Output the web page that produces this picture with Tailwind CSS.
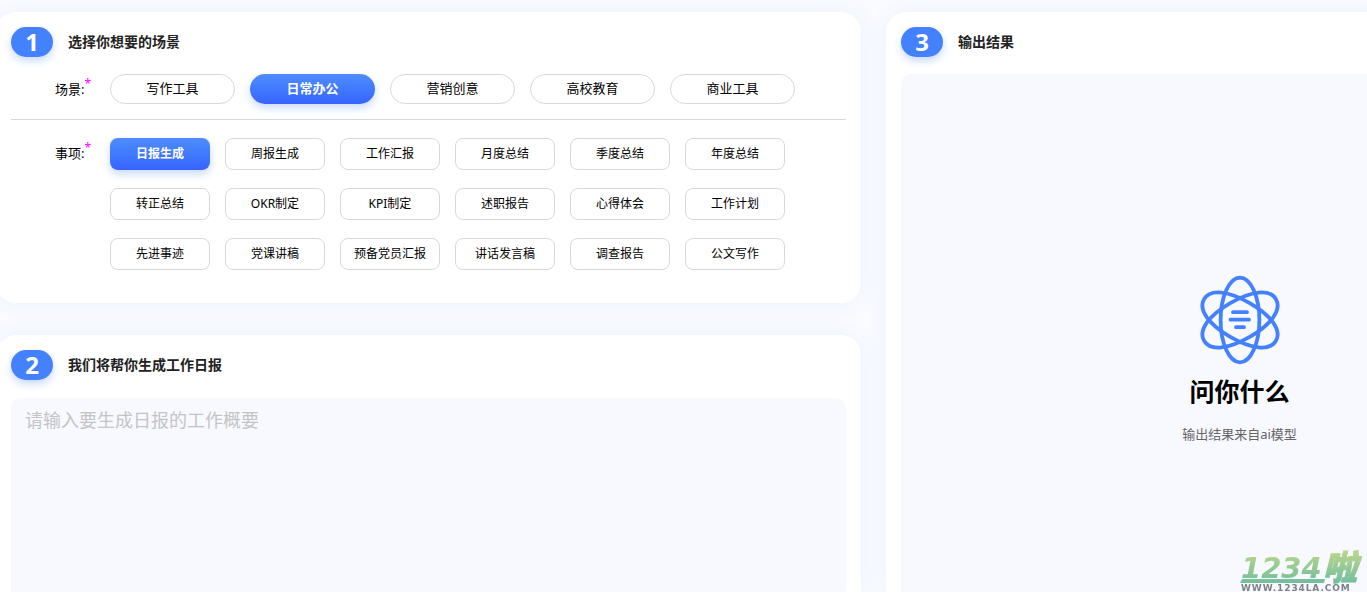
<!DOCTYPE html>
<html lang="zh-CN">
<head>
<meta charset="utf-8">
<meta name="viewport" content="width=device-width, initial-scale=1">
<title>问你什么</title>
<script src="https://cdn.jsdelivr.net/npm/@tailwindcss/browser@4"></script>
</head>
<body class="h-screen overflow-hidden bg-[#fafbff] font-['Noto_Sans','Noto_Sans_CJK_SC',sans-serif] text-black">
<main class="-ml-1 -mr-[226px] grid min-h-screen grid-cols-[865fr_707fr] gap-[25px] pt-3">
  <div class="flex min-w-0 flex-col gap-8">
    <section class="rounded-[20px] bg-white px-[15px] pt-[15px] pb-[33px] shadow-[0_0_25px_#eaf2ff]">
      <header class="flex items-center gap-[15px]">
        <span class="flex h-[30px] w-[42px] items-center justify-center rounded-full bg-[#4381ff] text-2xl font-bold text-white shadow-[0_4px_8px_#c9d9ff]">1</span>
        <h2 class="text-sm font-bold text-[#222]">选择你想要的场景</h2>
      </header>
      <div class="mt-[17px] flex border-b border-[#d9d9d9] pb-[15px]">
        <div id="scene" class="w-[99px] shrink-0 pl-11 text-[13px] leading-[30px]">场景:<sup class="text-xs text-[#f0f]">*</sup></div>
        <div role="group" aria-labelledby="scene" class="flex gap-[15px] text-[13px]">
          <button class="h-[30px] w-[125px] rounded-full border border-[#d9d9d9]">写作工具</button>
          <button class="h-[30px] w-[125px] rounded-full bg-linear-to-b from-[#4e8dff] to-[#3763ff] font-bold text-white shadow-[0_4px_8px_#c9d9ff]">日常办公</button>
          <button class="h-[30px] w-[125px] rounded-full border border-[#d9d9d9]">营销创意</button>
          <button class="h-[30px] w-[125px] rounded-full border border-[#d9d9d9]">高校教育</button>
          <button class="h-[30px] w-[125px] rounded-full border border-[#d9d9d9]">商业工具</button>
        </div>
      </div>
      <div class="mt-[18px] flex">
        <div id="item" class="w-[99px] shrink-0 pl-11 text-[13px] leading-[30px]">事项:<sup class="text-xs text-[#f0f]">*</sup></div>
        <div role="group" aria-labelledby="item" class="grid grid-cols-[repeat(6,100px)] gap-x-[15px] gap-y-[18px] text-xs">
          <button class="h-8 rounded-lg bg-linear-to-b from-[#4e8dff] to-[#3763ff] font-bold text-white shadow-[0_4px_8px_#c9d9ff]">日报生成</button>
          <button class="h-8 rounded-lg border border-[#d9d9d9]">周报生成</button>
          <button class="h-8 rounded-lg border border-[#d9d9d9]">工作汇报</button>
          <button class="h-8 rounded-lg border border-[#d9d9d9]">月度总结</button>
          <button class="h-8 rounded-lg border border-[#d9d9d9]">季度总结</button>
          <button class="h-8 rounded-lg border border-[#d9d9d9]">年度总结</button>
          <button class="h-8 rounded-lg border border-[#d9d9d9]">转正总结</button>
          <button class="h-8 rounded-lg border border-[#d9d9d9]">OKR制定</button>
          <button class="h-8 rounded-lg border border-[#d9d9d9]">KPI制定</button>
          <button class="h-8 rounded-lg border border-[#d9d9d9]">述职报告</button>
          <button class="h-8 rounded-lg border border-[#d9d9d9]">心得体会</button>
          <button class="h-8 rounded-lg border border-[#d9d9d9]">工作计划</button>
          <button class="h-8 rounded-lg border border-[#d9d9d9]">先进事迹</button>
          <button class="h-8 rounded-lg border border-[#d9d9d9]">党课讲稿</button>
          <button class="h-8 rounded-lg border border-[#d9d9d9]">预备党员汇报</button>
          <button class="h-8 rounded-lg border border-[#d9d9d9]">讲话发言稿</button>
          <button class="h-8 rounded-lg border border-[#d9d9d9]">调查报告</button>
          <button class="h-8 rounded-lg border border-[#d9d9d9]">公文写作</button>
        </div>
      </div>
    </section>
    <section class="flex grow flex-col rounded-t-[20px] bg-white px-[15px] pt-[15px] shadow-[0_0_25px_#eaf2ff]">
      <header class="flex items-center gap-[15px]">
        <span class="flex h-[30px] w-[42px] items-center justify-center rounded-full bg-[#4381ff] text-2xl font-bold text-white shadow-[0_4px_8px_#c9d9ff]">2</span>
        <h2 class="text-sm font-bold text-[#222]"><label for="summary">我们将帮你生成工作日报</label></h2>
      </header>
      <textarea id="summary" placeholder="请输入要生成日报的工作概要" class="mt-[18px] w-full grow resize-none rounded-t-[10px] bg-[#f7f9fe] px-[14px] py-2 text-lg leading-7 outline-none placeholder:text-[#c4c4c6]"></textarea>
    </section>
  </div>
  <section class="flex min-w-0 flex-col rounded-t-[20px] bg-white px-[15px] pt-[15px] shadow-[0_0_25px_#eaf2ff]">
    <header class="flex items-center gap-[15px]">
      <span class="flex h-[30px] w-[42px] items-center justify-center rounded-full bg-[#4381ff] text-2xl font-bold text-white shadow-[0_4px_8px_#c9d9ff]">3</span>
      <h2 class="text-sm font-bold text-[#222]">输出结果</h2>
    </header>
    <div class="mt-[17px] flex grow flex-col items-center rounded-t-[10px] bg-[#f7f9fe] pt-[200px]">
      <svg class="h-[92px] w-[84px]" viewBox="0 0 84 92" fill="none" stroke="#4381ff" stroke-width="3.800" stroke-linecap="round" aria-hidden="true">
        <ellipse cx="42" cy="46" rx="19.400" ry="42.300"/>
        <g transform="translate(42 46)">
          <path transform="rotate(60)" d="M-19.500 0C-19.500-24-12.500-41.500 0-41.500S19.500-24 19.500 0 12.500 41.500 0 41.500-19.500 24-19.500 0Z"/>
          <path transform="rotate(-60)" d="M-19.500 0C-19.500-24-12.500-41.500 0-41.500S19.500-24 19.500 0 12.500 41.500 0 41.500-19.500 24-19.500 0Z"/>
        </g>
        <path d="M35 38.200h14M32.500 45.700h18.500M38 53.200h8"/>
      </svg>
      <h1 class="mt-[7px] text-[25px] font-bold leading-9">问你什么</h1>
      <p class="mt-[15px] text-[13px] leading-5 text-[#666]">输出结果来自ai模型</p>
    </div>
  </section>
</main>
<a href="#" aria-label="1234啦" class="fixed right-0 bottom-0">
  <svg class="block h-[44px] w-[130px]" viewBox="0 0 130 44">
    <defs>
      <linearGradient id="leaf" gradientUnits="userSpaceOnUse" x1="0" y1="4" x2="0" y2="36">
        <stop stop-color="#b9d58b"/><stop offset="1" stop-color="#6fbe9d"/>
      </linearGradient>
    </defs>
    <text x="4" y="30" fill="url(#leaf)" font-family="DejaVu Sans" font-size="29" font-weight="bold" font-style="italic">1234</text>
    <text x="86" y="32" fill="url(#leaf)" stroke="url(#leaf)" stroke-width="1" font-family="Noto Sans CJK SC" font-size="34" font-weight="900" font-style="italic">啦</text>
    <path d="M5 31H88L87 35H3Z" fill="url(#leaf)"/>
    <text x="4" y="43" fill="#7e8286" class="tracking-widest" font-family="DejaVu Sans" font-size="9" font-weight="bold">WWW.1234LA.COM</text>
  </svg>
</a>
</body>
</html>
